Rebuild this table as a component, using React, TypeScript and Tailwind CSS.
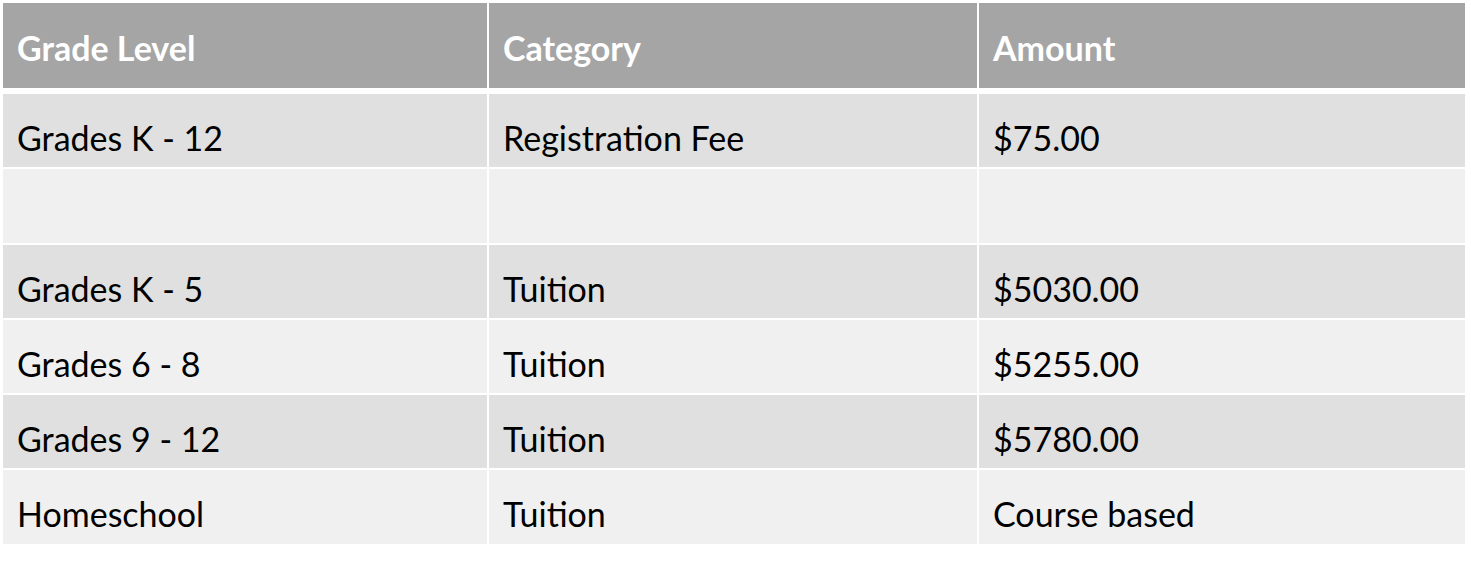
import React from 'react';

interface FeeRow {
  grade: string;
  category: string;
  amount: string;
}

const rows: FeeRow[] = [
  { grade: 'Grades K - 12', category: 'Registration Fee', amount: '$75.00' },
  { grade: '', category: '', amount: '' },
  { grade: 'Grades K - 5', category: 'Tuition', amount: '$5030.00' },
  { grade: 'Grades 6 - 8', category: 'Tuition', amount: '$5255.00' },
  { grade: 'Grades 9 - 12', category: 'Tuition', amount: '$5780.00' },
  { grade: 'Homeschool', category: 'Tuition', amount: 'Course based' },
];

const headers = ['Grade Level', 'Category', 'Amount'];

const App: React.FC = () => {
  return (
    <div className="w-[1471px] h-[561px] bg-white pt-[3px] pl-[3px] font-['Lato','Open_Sans',sans-serif]">
      <div className="w-[1462px] flex flex-col">
        {/* header */}
        <div className="grid grid-cols-[484px_488px_486px] gap-x-[2px] h-[85px] mb-[6px]">
          {headers.map((h) => (
            <div
              key={h}
              className="bg-[#a5a5a5] text-white font-bold text-[34px] pl-[14px] pt-[28px] leading-none whitespace-nowrap"
            >
              {h}
            </div>
          ))}
        </div>

        {/* body */}
        <div className="flex flex-col gap-y-[2px]">
          {rows.map((r, i) => (
            <div key={i} className="grid grid-cols-[484px_488px_486px] gap-x-[2px] h-[73.3px]">
              {[r.grade, r.category, r.amount].map((c, j) => (
                <div
                  key={j}
                  className={`${i % 2 === 0 ? 'bg-[#e0e0e0]' : 'bg-[#f0f0f0]'} text-black text-[34px] pl-[14px] pt-[27px] leading-none whitespace-nowrap`}
                >
                  {c}
                </div>
              ))}
            </div>
          ))}
        </div>
      </div>
    </div>
  );
};

export default App;
